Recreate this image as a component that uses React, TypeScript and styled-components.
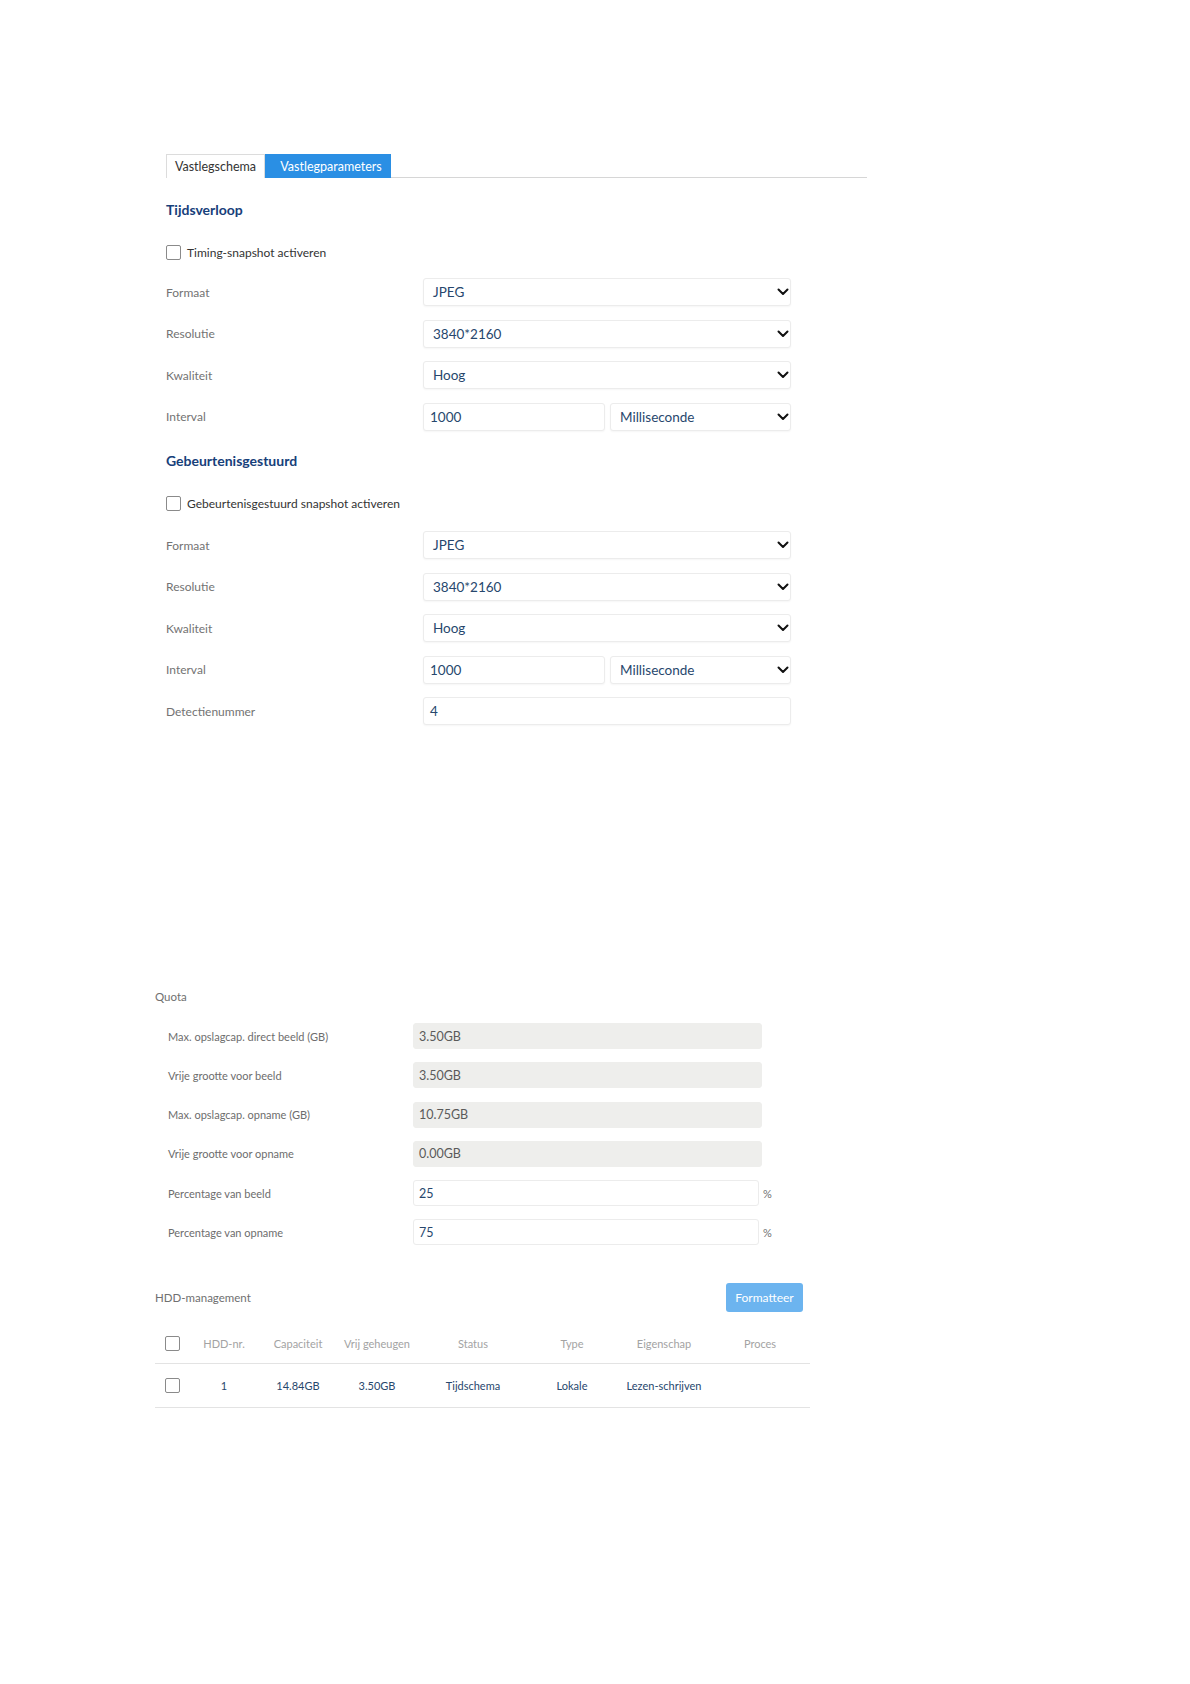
import React from "react";
import styled, { createGlobalStyle } from "styled-components";

const GlobalStyle = createGlobalStyle`
  html, body {
    margin: 0;
    padding: 0;
    background: #ffffff;
  }
  body {
    font-family: Lato, "Open Sans", "Liberation Sans", sans-serif;
    color: #333;
  }
`;

const Page = styled.div`
  width: 1190px;
  min-height: 1684px;
  padding-top: 154px;
  box-sizing: border-box;
`;

const Capture = styled.section`
  margin-left: 166px;
  width: 701px;
`;

const Tabs = styled.div`
  display: flex;
  height: 23px;
  border-bottom: 1px solid #d6d6d6;
`;

const Tab = styled.div<{ $active?: boolean }>`
  display: flex;
  align-items: center;
  justify-content: center;
  box-sizing: border-box;
  width: ${(p) => (p.$active ? "126px" : "99px")};
  height: 24px;
  padding-left: ${(p) => (p.$active ? "6px" : "0")};
  font-size: 12.5px;
  color: ${(p) => (p.$active ? "#ffffff" : "#333333")};
  background: ${(p) => (p.$active ? "#2a8fe4" : "#ffffff")};
  border: 1px solid ${(p) => (p.$active ? "#2a8fe4" : "#dcdcdc")};
  border-bottom: none;
`;

const SectionTitle = styled.h3<{ $top: number }>`
  margin: ${(p) => p.$top}px 0 0;
  height: 18px;
  line-height: 18px;
  font-size: 14px;
  font-weight: 700;
  color: #17407a;
`;

const CheckRow = styled.label`
  display: flex;
  align-items: center;
  gap: 6px;
  margin-top: 25px;
  height: 16px;
  font-size: 12px;
  color: #333;
`;

const Box = styled.span`
  display: inline-block;
  width: 15px;
  height: 15px;
  box-sizing: border-box;
  border: 1px solid #8a8a8a;
  border-radius: 2px;
  background: #fff;
`;

const Rows = styled.div<{ $top: number; $gap: number }>`
  display: flex;
  flex-direction: column;
  gap: ${(p) => p.$gap}px;
  margin-top: ${(p) => p.$top}px;
`;

const FormRow = styled.div`
  display: grid;
  grid-template-columns: 257px 368px;
  align-items: center;
  height: 28px;
`;

const Label = styled.span`
  font-size: 12px;
  color: #737373;
`;

const Field = styled.div`
  display: flex;
  align-items: center;
  box-sizing: border-box;
  height: 28px;
  padding: 0 1px 0 9px;
  background: #fff;
  border: 1px solid #ececec;
  border-radius: 3px;
  box-shadow: 0 1px 2px rgba(0, 0, 0, 0.04);
  font-size: 13.5px;
  color: #27476d;
`;

const FieldText = styled.span`
  flex: 1;
`;

const Split = styled.div`
  display: grid;
  grid-template-columns: 182px 181px;
  gap: 5px;
`;

const InputField = styled(Field)`
  padding-left: 6px;
`;

const Chevron = () => (
  <svg width="12" height="8" viewBox="0 0 12 8">
    <polyline
      points="1.5,1.5 6,6 10.5,1.5"
      fill="none"
      stroke="#111"
      strokeWidth="2"
      strokeLinecap="round"
      strokeLinejoin="round"
    />
  </svg>
);

const Select = ({ value }: { value: string }) => (
  <Field>
    <FieldText>{value}</FieldText>
    <Chevron />
  </Field>
);

const Quota = styled.section`
  margin: 265px 0 0 155px;
  width: 655px;
`;

const SmallTitle = styled.div`
  height: 14px;
  line-height: 14px;
  font-size: 11.5px;
  color: #707070;
`;

const QuotaRow = styled.div`
  display: grid;
  grid-template-columns: 245px 349px auto;
  align-items: center;
  height: 26px;
  padding-left: 13px;
`;

const QuotaLabel = styled.span`
  font-size: 11px;
  color: #6d6d6d;
  white-space: nowrap;
`;

const QuotaField = styled.div<{ $readonly?: boolean }>`
  display: flex;
  align-items: center;
  box-sizing: border-box;
  height: 26px;
  padding-left: 5px;
  border-radius: 3px;
  font-size: 12.5px;
  background: ${(p) => (p.$readonly ? "#eeeeec" : "#ffffff")};
  border: 1px solid ${(p) => (p.$readonly ? "#eeeeec" : "#ececec")};
  color: ${(p) => (p.$readonly ? "#5a5a5a" : "#27476d")};
  width: ${(p) => (p.$readonly ? "349px" : "346px")};
`;

const Unit = styled.span`
  margin-left: 1px;
  font-size: 11px;
  color: #707070;
`;

const HddHead = styled.div`
  display: flex;
  align-items: center;
  justify-content: space-between;
  margin-top: 38px;
  padding-right: 7px;
  height: 29px;
`;

const Button = styled.button`
  width: 77px;
  height: 29px;
  border: none;
  border-radius: 3px;
  background: #6cb4ef;
  color: #ffffff;
  font-family: inherit;
  font-size: 12px;
`;

const TableRow = styled.div<{ $head?: boolean }>`
  display: grid;
  grid-template-columns: 40px 58px 90px 68px 124px 74px 110px 82px;
  align-items: center;
  height: ${(p) => (p.$head ? "40px" : "43px")};
  margin-top: ${(p) => (p.$head ? "11px" : "0")};
  border-bottom: 1px solid #e3e3e3;
  font-size: 11px;
  color: ${(p) => (p.$head ? "#a3a3a3" : "#27476d")};
`;

const Cell = styled.span`
  text-align: center;
  white-space: nowrap;
`;

const CheckCell = styled.span`
  display: flex;
  padding-left: 10px;
`;

type Row = { label: string; kind: "select" | "input" | "interval"; value: string };

const timingRows: Row[] = [
  { label: "Formaat", kind: "select", value: "JPEG" },
  { label: "Resolutie", kind: "select", value: "3840*2160" },
  { label: "Kwaliteit", kind: "select", value: "Hoog" },
  { label: "Interval", kind: "interval", value: "1000" },
];

const eventRows: Row[] = [...timingRows, { label: "Detectienummer", kind: "input", value: "4" }];

const renderRow = (r: Row) => (
  <FormRow key={r.label}>
    <Label>{r.label}</Label>
    {r.kind === "select" && <Select value={r.value} />}
    {r.kind === "input" && (
      <InputField>
        <FieldText>{r.value}</FieldText>
      </InputField>
    )}
    {r.kind === "interval" && (
      <Split>
        <InputField>
          <FieldText>{r.value}</FieldText>
        </InputField>
        <Select value="Milliseconde" />
      </Split>
    )}
  </FormRow>
);

const quota = [
  { label: "Max. opslagcap. direct beeld (GB)", value: "3.50GB", ro: true },
  { label: "Vrije grootte voor beeld", value: "3.50GB", ro: true },
  { label: "Max. opslagcap. opname (GB)", value: "10.75GB", ro: true },
  { label: "Vrije grootte voor opname", value: "0.00GB", ro: true },
  { label: "Percentage van beeld", value: "25", ro: false },
  { label: "Percentage van opname", value: "75", ro: false },
];

const columns = ["HDD-nr.", "Capaciteit", "Vrij geheugen", "Status", "Type", "Eigenschap", "Proces"];
const disk = ["1", "14.84GB", "3.50GB", "Tijdschema", "Lokale", "Lezen-schrijven", ""];

export default function App() {
  return (
    <Page>
      <GlobalStyle />
      <Capture>
        <Tabs>
          <Tab>Vastlegschema</Tab>
          <Tab $active>Vastlegparameters</Tab>
        </Tabs>

        <SectionTitle $top={23}>Tijdsverloop</SectionTitle>
        <CheckRow>
          <Box />
          Timing-snapshot activeren
        </CheckRow>
        <Rows $top={18} $gap={13.6}>
          {timingRows.map(renderRow)}
        </Rows>

        <SectionTitle $top={21.5}>Gebeurtenisgestuurd</SectionTitle>
        <CheckRow>
          <Box />
          Gebeurtenisgestuurd snapshot activeren
        </CheckRow>
        <Rows $top={20} $gap={13.5}>
          {eventRows.map(renderRow)}
        </Rows>
      </Capture>

      <Quota>
        <SmallTitle>Quota</SmallTitle>
        <Rows $top={19} $gap={13.2}>
          {quota.map((q) => (
            <QuotaRow key={q.label}>
              <QuotaLabel>{q.label}</QuotaLabel>
              <QuotaField $readonly={q.ro}>{q.value}</QuotaField>
              {!q.ro && <Unit>%</Unit>}
            </QuotaRow>
          ))}
        </Rows>

        <HddHead>
          <SmallTitle>HDD-management</SmallTitle>
          <Button>Formatteer</Button>
        </HddHead>

        <TableRow $head>
          <CheckCell>
            <Box />
          </CheckCell>
          {columns.map((c) => (
            <Cell key={c}>{c}</Cell>
          ))}
        </TableRow>
        <TableRow>
          <CheckCell>
            <Box />
          </CheckCell>
          {disk.map((d, i) => (
            <Cell key={i}>{d}</Cell>
          ))}
        </TableRow>
      </Quota>
    </Page>
  );
}
